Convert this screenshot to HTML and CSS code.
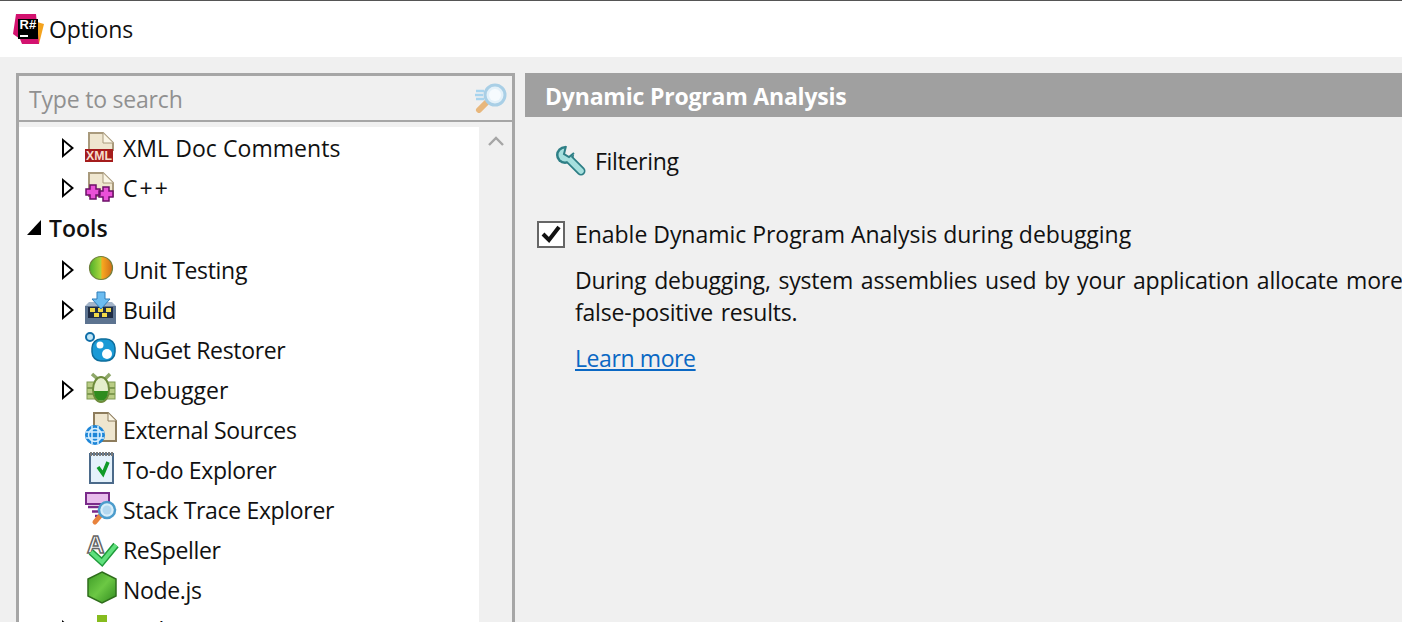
FILE: index.html
```html
<!DOCTYPE html>
<html lang="en">
<head>
<meta charset="utf-8">
<title>Options</title>
<link rel="stylesheet" href="styles.css">
</head>
<body>
<header class="titlebar">
  <svg class="logo" width="34" height="34" viewBox="0 0 34 34">
    <path d="M26 10L33 12L28 32H20Z" fill="#f4a31e"/>
    <path d="M5 2H25L28 32H11L9 27L2 22Z" fill="#d3126f"/>
    <rect x="7" y="7" width="20" height="20" fill="#000"/>
    <rect x="9" y="23" width="8" height="2" fill="#fff"/>
    <text class="logo-text" x="8.5" y="17">R#</text>
  </svg>
  <span class="title">Options</span>
</header>
<main class="content">
  <aside class="left">
    <div class="search">
      <span class="placeholder">Type to search</span>
      <svg class="search-ico" width="34" height="30" viewBox="0 0 34 30">
        <path d="M3 8H11M2 12H10M3 16H11" stroke="#a8d4ee" stroke-width="2.4"/>
        <path d="M13 20L6 27" stroke="#e8b77c" stroke-width="6" stroke-linecap="round"/>
        <circle cx="22" cy="12" r="10" fill="#e4f1f9" stroke="#a9cfe6" stroke-width="3"/>
        <circle cx="22" cy="12" r="6" fill="#f6fbfe"/>
      </svg>
    </div>
    <div class="tree-wrap">
      <ul class="tree">
        <li class="row child loose"><span class="arrow"></span>
          <svg class="ico" viewBox="0 0 32 32"><path d="M4 1H18L28 11V18H4Z" fill="#efe6cf" stroke="#a99a7c" stroke-width="2"/><path d="M18 1V11H28" fill="#fbf6e6" stroke="#a99a7c"/><rect x="0" y="17" width="28" height="13" fill="#a51c1c"/><text class="ico-text" x="1" y="28" textLength="26" lengthAdjust="spacingAndGlyphs">XML</text></svg>
          <span>XML Doc Comments</span></li>
        <li class="row child wide"><span class="arrow"></span>
          <svg class="ico" viewBox="0 0 32 32"><path d="M4 1H18L28 11V24H4Z" fill="#efe6cf" stroke="#a99a7c" stroke-width="2"/><path d="M18 1V11H28" fill="#fbf6e6" stroke="#a99a7c"/><path d="M5 13h6v4h4v6h-4v4H5v-4H1v-6h4zM18 15h6v4h4v6h-4v4h-6v-4h-4v-6h4z" fill="#ea50d8" stroke="#6c0f68" stroke-width="1.5"/></svg>
          <span>C++</span></li>
        <li class="row group"><span class="open"></span><span>Tools</span></li>
        <li class="row child"><span class="arrow"></span>
          <svg class="ico" viewBox="0 0 32 32"><defs><linearGradient id="ut"><stop offset="0" stop-color="#4caf2a"/><stop offset=".48" stop-color="#a8d43c"/><stop offset=".55" stop-color="#f8a820"/><stop offset="1" stop-color="#cf6d18"/></linearGradient></defs><circle cx="16" cy="14" r="11.5" fill="url(#ut)" stroke="#6f7f3c" stroke-width="1.2"/></svg>
          <span>Unit Testing</span></li>
        <li class="row child"><span class="arrow"></span>
          <svg class="ico" viewBox="0 0 32 32"><rect x="0" y="12" width="31" height="18" fill="#5c7390"/><path d="M0 12L4 8H27L31 12Z" fill="#a3b4c8"/><rect x="3" y="13" width="25" height="11" fill="#1f2c44"/><path d="M5 14h5v4H5zM13 14h5v4h-5zM21 14h5v4h-5zM9 19h5v4H9zM17 19h5v4h-5z" fill="#f0d848"/><path d="M12 -2H20V5H25L16 15L7 5H12Z" fill="#6cbcf0" stroke="#2f7cb8"/></svg>
          <span>Build</span></li>
        <li class="row child no-arrow">
          <svg class="ico" viewBox="0 0 32 32"><circle cx="5" cy="3" r="4" fill="#bfe6f8" stroke="#0f6ea8" stroke-width="2"/><rect x="7" y="5" width="23" height="22" rx="9" fill="#1a9ad6" stroke="#0d6d9c" stroke-width="1.5"/><circle cx="15" cy="11" r="3.5" fill="#fff"/><circle cx="22" cy="20" r="5" fill="#fff"/></svg>
          <span>NuGet Restorer</span></li>
        <li class="row child loose"><span class="arrow"></span>
          <svg class="ico" viewBox="0 0 32 32"><path d="M7 0L15 7M25 0L18 7" stroke="#8fa86a" stroke-width="3.5"/><rect x="2" y="8" width="28" height="17" fill="#b9cc84" stroke="#7f9a50"/><path d="M2 14H30M2 20H30" stroke="#7f9a50" stroke-width="2"/><ellipse cx="16" cy="15.500" rx="8" ry="12.500" fill="#e4eecb" stroke="#6e8c3c" stroke-width="2"/><path d="M9 17H23C23 30 9 30 9 17Z" fill="#2f8c1e"/></svg>
          <span>Debugger</span></li>
        <li class="row child no-arrow">
          <svg class="ico" viewBox="0 0 32 32"><path d="M9 -1H23L31 7V27H9Z" fill="#efe6cf" stroke="#8d7c5c" stroke-width="2"/><path d="M23 -1V7H31" fill="#fbf6e6" stroke="#8d7c5c"/><circle cx="10" cy="21" r="10" fill="#1d86d8"/><circle cx="10" cy="21" r="6.500" fill="none" stroke="#d8f0ff" stroke-width="1.5"/><path d="M1 18H19M1 24H19M7 12V30M13 12V30" stroke="#d8f0ff" stroke-width="1.5"/></svg>
          <span>External Sources</span></li>
        <li class="row child no-arrow">
          <svg class="ico" viewBox="0 0 32 32"><rect x="5" y="0" width="23" height="29" fill="#e4f1fb" stroke="#4b6a8a" stroke-width="2"/><path d="M5 0H28" stroke="#7a7a7a" stroke-width="4" stroke-dasharray="2 1"/><path d="M13 13L18 20L23 8" stroke="#0e9a28" stroke-width="3.500" fill="none"/></svg>
          <span>To-do Explorer</span></li>
        <li class="row child no-arrow">
          <svg class="ico" viewBox="0 0 32 32"><rect x="1" y="-1" width="23" height="11" fill="#e8bcec" stroke="#7a2a8a" stroke-width="2"/><path d="M3 13H22M7 17.500H18M10 22H15" stroke="#7a2a8a" stroke-width="2.500"/><path d="M15 22L10 28" stroke="#e8823c" stroke-width="5" stroke-linecap="round"/><circle cx="22" cy="16" r="8" fill="#d8eefa" stroke="#4c9ccc" stroke-width="2.500"/><circle cx="22" cy="16" r="4.500" fill="#b4d8f0"/></svg>
          <span>Stack Trace Explorer</span></li>
        <li class="row child no-arrow">
          <svg class="ico" viewBox="0 0 32 32"><text class="ico-letter" x="2" y="19">A</text><path d="M6 18L17 28L31 11" stroke="#1f9a3a" stroke-width="7" fill="none"/><path d="M6 18L17 28L31 11" stroke="#5fe07c" stroke-width="4" fill="none"/></svg>
          <span>ReSpeller</span></li>
        <li class="row child no-arrow">
          <svg class="ico" viewBox="0 0 32 32"><defs><linearGradient id="nd" x1="0" y1="0" x2="1" y2="1"><stop offset="0" stop-color="#3c9a26"/><stop offset=".5" stop-color="#6cc844"/><stop offset="1" stop-color="#2f8a1e"/></linearGradient></defs><path d="M17 -2L31 5V22L17 29L3 22V5Z" fill="url(#nd)" stroke="#2f6e1c" stroke-width="1.500"/></svg>
          <span>Node.js</span></li>
        <li class="row child"><span class="arrow"></span>
          <svg class="ico" viewBox="0 0 32 32"><rect x="12" y="1" width="10" height="14" fill="#86bc1e"/><rect x="7" y="9" width="20" height="14" fill="#7aa8d8"/></svg>
          <span>Tasks</span></li>
      </ul>
      <div class="scrollbar">
        <svg width="16" height="10" viewBox="0 0 16 10"><path d="M1 9L8 2L15 9" fill="none" stroke="#a6a6a6" stroke-width="2.400"/></svg>
      </div>
    </div>
  </aside>
  <section class="right">
    <h1 class="heading">Dynamic Program Analysis</h1>
    <div class="filter">
      <svg width="32" height="32" viewBox="0 0 32 32">
        <path d="M13 13L26 26" stroke="#2e7f86" stroke-width="9" stroke-linecap="round"/>
        <circle cx="10" cy="10" r="9" fill="#2e7f86"/>
        <path d="M13 13L26 26" stroke="#a6e0de" stroke-width="5.500" stroke-linecap="round"/>
        <circle cx="10" cy="10" r="6.500" fill="#a6e0de"/>
        <path d="M9 9L11 -1H22V8L14 12Z" fill="#f0f0f0"/>
        <path d="M11 1L9 9L14 12L19 8" fill="none" stroke="#2e7f86" stroke-width="2"/>
      </svg>
      <span>Filtering</span>
    </div>
    <label class="check">
      <span class="box"><svg width="22" height="20" viewBox="0 0 22 20"><path d="M3 10L9 16L19 3" fill="none" stroke="#111" stroke-width="4"/></svg></span>
      <span class="check-label">Enable Dynamic Program Analysis during debugging</span>
    </label>
    <p class="desc">During debugging, system assemblies used by your application allocate more<br>false-positive results.</p>
    <a class="link" href="#">Learn more</a>
  </section>
</main>
</body>
</html>
```
FILE: styles.css
```css
* { box-sizing: border-box; }
html, body { margin: 0; height: 622px; overflow: hidden; }
body {
  font-family: "Open Sans", "Noto Sans", sans-serif;
  font-size: 23px;
  color: #111;
  background: #f0f0f0;
  display: flex;
  flex-direction: column;
}
.titlebar {
  height: 57px;
  flex: none;
  background: #fff;
  border-top: 1px solid #555;
  display: flex;
  align-items: center;
  padding-left: 11px;
}
.logo { flex: none; margin-top: -1px; }
.logo-text {
  font: bold 13px "Liberation Sans", sans-serif;
  fill: #fff;
}
.title { margin-left: 4px; letter-spacing: -.1px; }
.content {
  flex: 1;
  display: flex;
  min-height: 0;
  padding: 16px 0 0 16px;
  gap: 10px;
}
.left {
  width: 499px;
  flex: none;
  border: solid #a6a6a6;
  border-width: 3px 3px 0;
  display: flex;
  flex-direction: column;
  min-height: 0;
}
.search {
  height: 46px;
  flex: none;
  border-bottom: 2px solid #a6a6a6;
  display: flex;
  align-items: center;
  justify-content: space-between;
  padding: 2px 5px 0 10px;
}
.search-ico { margin-top: -3px; }
.placeholder { color: #909090; letter-spacing: -.2px; }
.tree-wrap {
  flex: 1;
  display: flex;
  min-height: 0;
  padding-top: 5px;
  overflow: hidden;
}
.tree {
  width: 460px;
  flex: none;
  margin: 0;
  padding: 1px 0 0;
  list-style: none;
  background: #fff;
  overflow: hidden;
}
.row {
  height: 40px;
  display: flex;
  align-items: center;
  white-space: nowrap;
  letter-spacing: -.33px;
}
.loose { letter-spacing: .06px; }
.wide { letter-spacing: 2px; }
.child { padding-left: 43px; }
.no-arrow { padding-left: 66px; }
.group {
  font-weight: 600;
  padding: 0 0 3px 8px;
  height: 42px;
  letter-spacing: 0;
}
.arrow {
  width: 0;
  height: 0;
  flex: none;
  margin-right: 11px;
  position: relative;
  border-style: solid;
  border-width: 10px 0 10px 12px;
  border-color: transparent transparent transparent #000;
}
.arrow::after {
  content: "";
  position: absolute;
  left: -10px;
  top: -6.5px;
  width: 0;
  height: 0;
  border-style: solid;
  border-width: 6.5px 0 6.5px 7.8px;
  border-color: transparent transparent transparent #fff;
}
.open {
  width: 0;
  height: 0;
  flex: none;
  border-style: solid;
  border-width: 0 0 15px 14px;
  border-color: transparent transparent #000 transparent;
  margin-right: 8px;
}
.ico { flex: none; width: 32px; height: 32px; margin-right: 6px; overflow: visible; }
.ico-text {
  font: bold 12px "Liberation Sans", sans-serif;
  letter-spacing: 0;
  fill: #f6ddcc;
}
.ico-letter {
  font: bold 24px "Liberation Sans", sans-serif;
  letter-spacing: 0;
  fill: #fff;
  stroke: #666;
  stroke-width: 1.5px;
}
.scrollbar { flex: 1; display: flex; justify-content: center; padding-top: 9px; }
.scrollbar svg { display: block; }
.right { flex: 1; min-width: 0; overflow: hidden; }
.heading {
  margin: 0;
  height: 44px;
  background: #a0a0a0;
  color: #fff;
  font-size: 23px;
  font-weight: 700;
  line-height: 47px;
  padding-left: 20px;
  letter-spacing: -.2px;
}
.filter {
  display: flex;
  align-items: center;
  gap: 9px;
  height: 32px;
  margin: 28px 0 0 30px;
  letter-spacing: -.3px;
}
.filter svg { overflow: visible; margin-right: -1px; }
.check {
  display: flex;
  align-items: center;
  gap: 10px;
  margin: 41px 0 0 12px;
  height: 32px;
}
.check-label { letter-spacing: -.03px; }
.box {
  width: 28px;
  height: 27px;
  flex: none;
  background: #fff;
  border: 2px solid #666;
  display: flex;
  align-items: center;
  justify-content: center;
}
.desc {
  margin: 14px 0 0 50px;
  line-height: 32px;
  white-space: nowrap;
  letter-spacing: -.2px;
  word-spacing: 2px;
}
.link {
  display: inline-block;
  margin: 14px 0 0 50px;
  color: #0a68c4;
  line-height: 32px;
  letter-spacing: -.4px;
}
```
